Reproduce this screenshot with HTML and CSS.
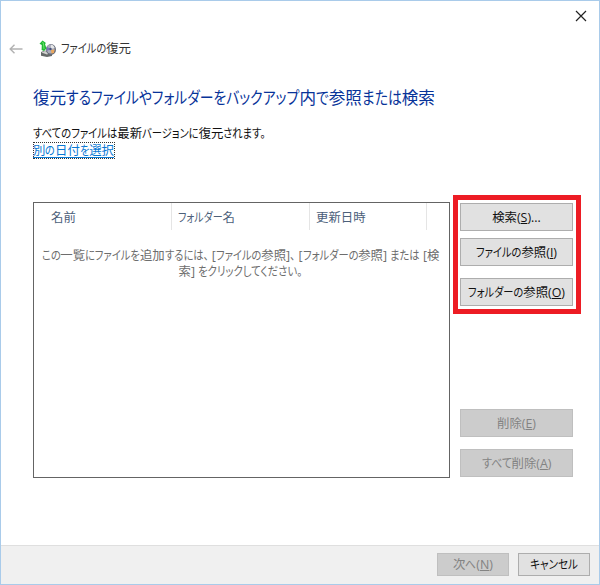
FILE: index.html
```html
<!DOCTYPE html>
<html lang="ja">
<head>
<meta charset="utf-8">
<title>ファイルの復元</title>
<link rel="stylesheet" href="styles.css">
</head>
<body>
<div class="window">
  <div class="titlebar">
    <svg class="close" width="12" height="12" viewBox="0 0 12 12"><path d="M1 1L11 11M11 1L1 11"/></svg>
  </div>
  <header class="nav">
    <svg class="back" width="14" height="10" viewBox="0 0 14 10"><path d="M1 5H13.5M5.5 .7L1.2 5L5.5 9.3"/></svg>
    <svg class="app-icon" width="18" height="18" viewBox="0 0 18 18">
      <path d="M2 12L6 10.5L13 13L13 16L8 17L2 15.8Z" fill="#656969"/>
      <path d="M2.5 12.5L6 11L11 13L8 14.6Z" fill="#d0d1ce"/>
      <ellipse cx="12" cy="9.5" rx="5" ry="5.4" fill="#666b79"/>
      <ellipse cx="11.6" cy="9" rx="4" ry="4.5" fill="#a9acba"/>
      <path d="M11.5 9L12 4.7Q15 5 15.6 8Z" fill="#e5e6e7"/>
      <path d="M11.5 9L7.5 6.5L8 11Z" fill="#7c70b6"/>
      <path d="M12 10L15.5 9.5L15 13L12.5 13.5Z" fill="#eba75c"/>
      <circle cx="11.5" cy="9" r="1.2" fill="#455079"/>
      <path d="M.5 3.8L3.5 .5L7 3L6 4L7.5 8.5L5 11L2.6 10L2.8 5Z" fill="#20b935"/>
      <path d="M3.6 2L4.5 4L5 9" fill="none" stroke="#70e36d"/>
    </svg>
    <span class="jp app-name" data-width="70">ファイルの復元</span>
  </header>
  <main class="content">
    <h1 class="jp" data-width="402">復元するファイルやフォルダーをバックアップ内で参照または検索</h1>
    <p class="jp note" data-width="233">すべてのファイルは最新バージョンに復元されます。</p>
    <a class="link"><span class="jp" data-width="81">別の日付を選択</span></a>
    <div class="panel">
      <section class="list">
        <div class="columns">
          <div class="column"><span class="jp" data-width="25">名前</span></div>
          <div class="column"><span class="jp" data-width="57">フォルダー名</span></div>
          <div class="column last"><span class="jp" data-width="50">更新日時</span></div>
        </div>
        <div class="message">
          <div class="jp" data-width="398">この一覧にファイルを追加するには、[ファイルの参照]、[フォルダーの参照] または [検</div>
          <div class="jp" data-width="124">索] をクリックしてください。</div>
        </div>
      </section>
      <aside class="actions">
        <div class="highlight">
          <button><span class="jp" data-width="47">検索(<u>S</u>)...</span></button>
          <button><span class="jp" data-width="81">ファイルの参照(<u>I</u>)</span></button>
          <button><span class="jp" data-width="97">フォルダーの参照(<u>O</u>)</span></button>
        </div>
        <div class="removal">
          <button disabled><span class="jp" data-width="40">削除(<u>E</u>)</span></button>
          <button disabled><span class="jp" data-width="70">すべて削除(<u>A</u>)</span></button>
        </div>
      </aside>
    </div>
  </main>
  <footer class="footer">
    <button disabled><span class="jp" data-width="40">次へ(<u>N</u>)</span></button>
    <button><span class="jp" data-width="48">キャンセル</span></button>
  </footer>
</div>
<script src="script.js"></script>
</body>
</html>
```
FILE: styles.css
```css
* { box-sizing: border-box; }
body {
  margin: 0;
  font: 12.4px/16px "Open Sans", "Noto Sans CJK JP", sans-serif;
  color: #111;
}
.window {
  width: 600px;
  height: 585px;
  display: flex;
  flex-direction: column;
  background: #fff;
  border: 1px solid #a9cbea;
}
.jp { white-space: pre; width: max-content; display: block; }
.kana {
  display: inline-block;
  font-feature-settings: "palt";
  transform-origin: 0 50%;
  line-height: inherit;
}
.kana.comma { padding-right: 4px; }
.titlebar { height: 34px; padding: 9px 12px 0; display: flex; justify-content: flex-end; }
.close { fill: none; stroke: #222; stroke-width: 1.2; }
.nav { height: 28px; padding-left: 8px; display: flex; align-items: center; }
.back { fill: none; stroke: #b2b2b2; stroke-width: 1.4; }
.app-icon { margin: 0 4px 0 16px; }
.app-name { color: #333; }
.content { flex: 1; padding-left: 32px; }
h1 {
  margin: 23px 0 0;
  font-size: 16.6px;
  line-height: 24px;
  font-weight: 400;
  color: #073399;
}
.note { margin: 16px 0 0; }
.link {
  display: block;
  width: 82px;
  height: 17px;
  border: 1px dotted #333;
  color: #0878d4;
  line-height: 15px;
}
.link .jp { margin-left: -1px; border-bottom: 1px solid #0878d4; height: 15px; }
.panel { display: flex; margin-top: 36px; }
.list { width: 417px; height: 276px; margin-top: 7px; border: 1px solid #646464; }
.columns { display: flex; height: 27px; color: #4c607a; }
.column { width: 138px; padding: 7px 0 0 6px; border-right: 1px solid #e5e5e5; }
.column:first-child { padding-left: 17px; }
.column.last { width: 117px; }
.message { display: flex; flex-direction: column; align-items: center; margin: 18px 2px 0 0; color: #6d6d6d; }
.actions { margin-left: 3px; }
.highlight {
  width: 128px;
  height: 119px;
  padding: 3px 2px;
  border: 5px solid #ed1c24;
}
button {
  display: flex;
  align-items: center;
  justify-content: center;
  width: 113px;
  height: 28px;
  padding: 1px 0 0;
  border: 1px solid #adadad;
  background: #e1e1e1;
  color: #111;
  font: inherit;
}
button:disabled { color: #838383; background: #ccc; border-color: #bfbfbf; }
.highlight button + button { margin-top: 7px; }
.highlight button:last-child { margin-top: 12px; }
.removal { display: grid; gap: 12px; margin: 95px 0 0 7px; }
.footer {
  height: 39px;
  padding: 7px 9px 0;
  display: flex;
  justify-content: flex-end;
  gap: 9px;
  background: #f0f0f0;
  border-top: 1px solid #dfdfdf;
}
.footer button { width: 72px; height: 23px; }
```
FILE: script.js
```js
const kana = /([\u3001\u3002\u3040-\u30ff]+)/;
document.querySelectorAll(".jp").forEach((label) => {
  [...label.childNodes].forEach((node) => {
    if (node.nodeType !== Node.TEXT_NODE) return;
    const parts = node.textContent.split(kana).filter(Boolean).map((part) => {
      if (!kana.test(part)) return document.createTextNode(part);
      const run = document.createElement("span");
      run.className = part.endsWith("、") ? "kana comma" : "kana";
      run.textContent = part;
      return run;
    });
    node.replaceWith(...parts);
  });
  const runs = [...label.querySelectorAll(".kana")];
  const widths = runs.map((run) => run.getBoundingClientRect().width);
  const total = widths.reduce((a, b) => a + b, 0);
  if (!total) return;
  const fixed = label.getBoundingClientRect().width - total;
  const ratio = (Number(label.dataset.width) - fixed) / total;
  runs.forEach((run, i) => {
    run.style.width = widths[i] * ratio + "px";
    run.style.transform = `scaleX(${ratio})`;
  });
});
```
